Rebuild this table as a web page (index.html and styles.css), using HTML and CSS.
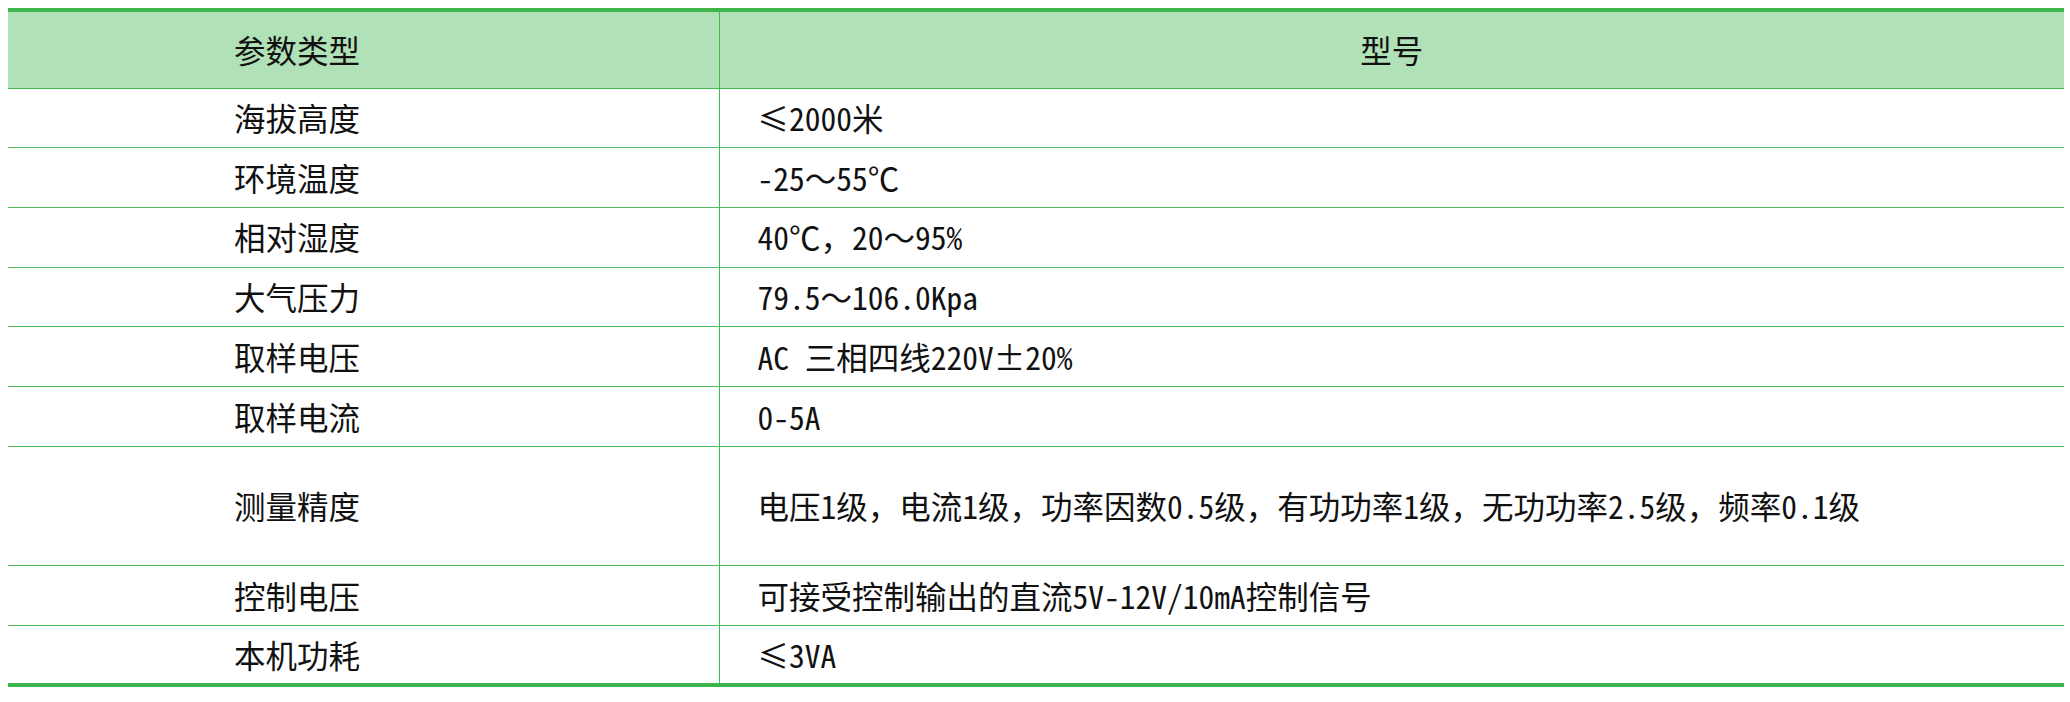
FILE: index.html
```html
<!DOCTYPE html>
<html lang="zh-CN">
<head>
<meta charset="utf-8">
<title>参数</title>
<link rel="stylesheet" href="styles.css">
</head>
<body>
<table class="spec">
  <colgroup>
    <col class="col-name">
    <col class="col-value">
  </colgroup>
  <thead>
    <tr class="head-row">
      <th class="name">参数类型</th>
      <th class="value-head">型号</th>
    </tr>
  </thead>
  <tbody>
    <tr class="row"><td class="name">海拔高度</td><td class="value">≤2000米</td></tr>
    <tr class="row"><td class="name">环境温度</td><td class="value">-25～55℃</td></tr>
    <tr class="row"><td class="name">相对湿度</td><td class="value">40℃，20～95%</td></tr>
    <tr class="row"><td class="name">大气压力</td><td class="value">79.5～106.0Kpa</td></tr>
    <tr class="row"><td class="name">取样电压</td><td class="value">AC 三相四线220V±20%</td></tr>
    <tr class="row"><td class="name">取样电流</td><td class="value">0-5A</td></tr>
    <tr class="row tall"><td class="name">测量精度</td><td class="value">电压1级，电流1级，功率因数0.5级，有功功率1级，无功功率2.5级，频率0.1级</td></tr>
    <tr class="row"><td class="name">控制电压</td><td class="value">可接受控制输出的直流5V-12V/10mA控制信号</td></tr>
    <tr class="row"><td class="name">本机功耗</td><td class="value">≤3VA</td></tr>
  </tbody>
</table>
</body>
</html>
```
FILE: styles.css
```css
html, body {
  background: #ffffff;
}
body {
  margin: 8px 0 0 8px;
  font-family: "Noto Sans Mono CJK SC", "Noto Sans CJK SC", "DejaVu Sans", sans-serif;
  font-size: 31.5px;
  color: #111111;
}
.spec {
  width: 2056px;
  border-collapse: collapse;
  table-layout: fixed;
  border-top: 4px solid #3db54a;
  border-bottom: 4px solid #3db54a;
}
.col-name { width: 711px; }
.col-value { width: 1345px; }
.spec th, .spec td {
  padding: 0;
  font-weight: normal;
  vertical-align: middle;
  white-space: nowrap;
  line-height: 1;
}
.head-row {
  height: 78px;
  background: #b1e1b7;
}
.head-row th {
  border-bottom: 1px solid #3dba4c;
}
.row { height: 59.7px; }
.row.tall { height: 119.4px; }
.row td {
  border-bottom: 1px solid #52bd5e;
}
.row:last-child td { border-bottom: none; }
.name {
  text-align: left;
  padding-left: 226px !important;
  border-right: 1px solid #3dba4c;
}
.value-head {
  text-align: center;
}
.value {
  text-align: left;
  padding-left: 38px !important;
}
```
